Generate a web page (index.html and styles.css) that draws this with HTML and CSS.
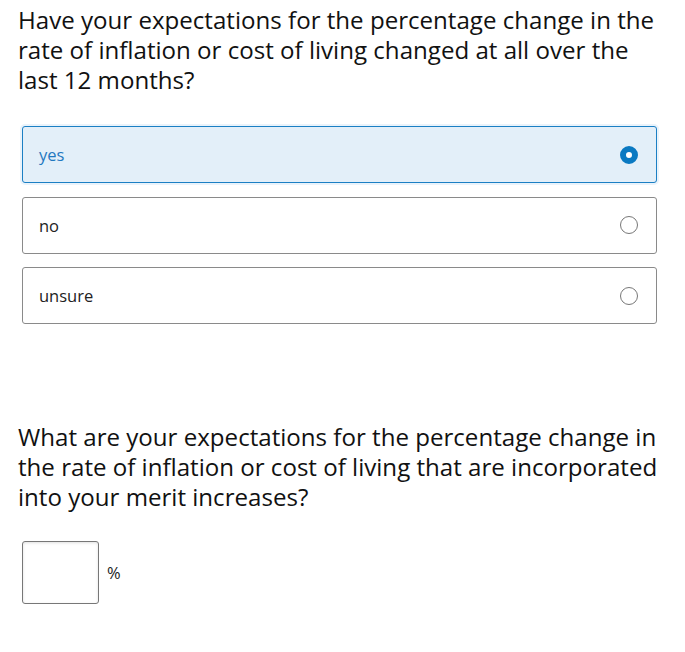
FILE: index.html
```html
<!DOCTYPE html>
<html lang="en">
<head>
    <meta charset="UTF-8">
    <meta name="viewport" content="width=device-width, initial-scale=1.0">
    <link rel="stylesheet" href="styles.css">
    <title>Survey</title>
</head>
<body>
    <div class="survey">
        <div class="question">
            <h2 class="question-title">Have your expectations for the percentage change in the rate of inflation or cost of living changed at all over the last 12 months?</h2>
            <div class="choices">
                <label class="choice selected">
                    <span class="choice-text">yes</span>
                    <span class="radio"></span>
                </label>
                <label class="choice">
                    <span class="choice-text">no</span>
                    <span class="radio"></span>
                </label>
                <label class="choice">
                    <span class="choice-text">unsure</span>
                    <span class="radio"></span>
                </label>
            </div>
        </div>

        <div class="question second">
            <h2 class="question-title">What are your expectations for the percentage change in the rate of inflation or cost of living that are incorporated into your merit increases?</h2>
            <div class="percent-row">
                <input type="text" class="percent-input">
                <span class="percent-sign">%</span>
            </div>
        </div>
    </div>
</body>
</html>
```

FILE: styles.css
```css
body {
    margin: 0;
    font-family: "Open Sans", "Liberation Sans", sans-serif;
    color: #1a1a1a;
    background: #fff;
}

.survey {
    padding: 5px 15px 0 18px;
}

.question-title {
    font-size: 24.1px;
    font-weight: normal;
    line-height: 30px;
    margin: 0;
    color: #111;
}

.choices {
    display: flex;
    flex-direction: column;
    gap: 13.5px;
    margin-top: 31px;
    padding-left: 4px;
    margin-right: 13px;
}

.choice {
    display: flex;
    align-items: center;
    justify-content: space-between;
    height: 57px;
    box-sizing: border-box;
    border: 1px solid #8a8a8a;
    border-radius: 3px;
    padding: 0 18px 0 16px;
    font-size: 16.5px;
    color: #222;
    cursor: pointer;
}

.choice.selected {
    background-color: #e3eff9;
    border-color: #1b7fc4;
    color: #1f78c0;
    box-shadow: 0 0 0 2px #eaf3fb;
}

.radio {
    width: 18px;
    height: 18px;
    border: 1px solid #777;
    border-radius: 50%;
    box-sizing: border-box;
    background: #fff;
}

.choice.selected .radio {
    border: 6px solid #0a79c2;
}

.second {
    margin-top: 98px;
}

.percent-row {
    display: flex;
    align-items: center;
    gap: 8px;
    margin-top: 29px;
    padding-left: 4px;
}

.percent-input {
    width: 77px;
    height: 63px;
    box-sizing: border-box;
    border: 1px solid #777;
    border-radius: 3px;
    box-shadow: inset 0 1px 3px rgba(0, 0, 0, 0.12);
}

.percent-sign {
    font-size: 16.5px;
    color: #222;
}
```
